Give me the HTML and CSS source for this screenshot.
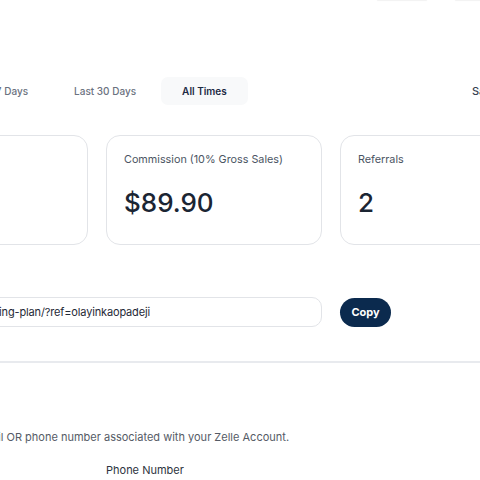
FILE: index.html
```html
<!DOCTYPE html>
<html>
<head>
<meta charset="utf-8">
<link rel="stylesheet" href="styles.css">
</head>
<body>
<div class="page">
  <div class="topbar">
    <span class="ghost ghost-a"></span>
    <span class="ghost ghost-b"></span>
  </div>
  <div class="tabs-row">
    <div class="tabs">
      <span class="tab">Last 7 Days</span>
      <span class="tab">Last 30 Days</span>
      <span class="tab active">All Times</span>
    </div>
    <span class="right-label">Sales</span>
  </div>
  <div class="cards">
    <div class="card">
      <div class="card-label">Total Sales</div>
      <div class="card-value">$899.00</div>
    </div>
    <div class="card">
      <div class="card-label">Commission (10% Gross Sales)</div>
      <div class="card-value">$89.90</div>
    </div>
    <div class="card">
      <div class="card-label">Referrals</div>
      <div class="card-value">2</div>
    </div>
  </div>
  <div class="link-row">
    <div class="link-input"><span class="link-text">https://example.com/p/mentoring-plan/?ref=olayinkaopadeji</span></div>
    <button class="copy-btn">Copy</button>
  </div>
  <div class="divider"></div>
  <p class="note">Enter the email OR phone number associated with your Zelle Account.</p>
  <div class="fields">
    <span class="field-label">Email</span>
    <span class="field-label">Phone Number</span>
  </div>
</div>
</body>
</html>
```
FILE: styles.css
```css
html, body {
  margin: 0;
  padding: 0;
  background: #ffffff;
  overflow: hidden;
  width: 480px;
  height: 480px;
}
body {
  font-family: Inter, "Noto Sans", sans-serif;
  color: #1f2937;
}
.page {
  margin-left: -128px;
  width: 740px;
}
.topbar {
  height: 0;
  display: flex;
  gap: 28px;
  padding-left: 505px;
}
.ghost {
  display: block;
  height: 1px;
  margin-top: -1px;
  box-shadow: 0 1px 1px rgba(0,0,0,0.06);
}
.ghost-a { width: 50px; }
.ghost-b { width: 50px; }
.tabs-row {
  display: flex;
  justify-content: space-between;
  align-items: center;
  margin-top: 77px;
  width: 740px;
}
.tabs {
  display: flex;
  gap: 4px;
  padding-left: 80px;
}
.tab {
  display: block;
  padding: 0 21px;
  height: 28px;
  line-height: 28px;
  border-radius: 7px;
  font-size: 10px;
  color: #6b7280;
  font-weight: 500;
}
.tab.active {
  background: #f8f9fa;
  color: #1c2a44;
  font-weight: 600;
}
.right-label {
  font-size: 11px;
  color: #374151;
  font-weight: 500;
  width: 140px;
}
.cards {
  display: grid;
  grid-template-columns: 216px 216px 216px;
  gap: 18px;
  margin-top: 30px;
}
.card {
  box-sizing: border-box;
  height: 110px;
  border: 1px solid #e2e4e8;
  border-radius: 14px;
  padding: 16px 17px 0;
}
.card-label {
  font-size: 10.8px;
  color: #4b5563;
  line-height: 16px;
}
.card-value {
  margin-top: 17px;
  font-size: 26px;
  font-weight: 500;
  color: #1b2533;
  line-height: 36px;
}
.link-row {
  display: flex;
  align-items: center;
  gap: 18px;
  margin-top: 52px;
}
.link-input {
  box-sizing: border-box;
  width: 450px;
  height: 30px;
  border: 1px solid #e2e4e8;
  border-radius: 10px;
  display: flex;
  justify-content: flex-end;
  align-items: center;
  overflow: hidden;
  padding-right: 171px;
}
.link-text {
  flex: none;
  font-size: 11px;
  letter-spacing: -0.15px;
  color: #1f2937;
  white-space: nowrap;
}
.copy-btn {
  box-sizing: border-box;
  width: 51px;
  height: 29px;
  border: none;
  border-radius: 15px;
  background: #0b2a4e;
  color: #ffffff;
  font-family: Inter, sans-serif;
  font-weight: 700;
  font-size: 11px;
  padding: 0;
}
.divider {
  margin-top: 34px;
  height: 2px;
  background: #e8eaee;
  width: 740px;
}
.note {
  margin: 66px 0 0;
  font-size: 11px;
  color: #555b66;
  line-height: 16px;
  padding-left: 54px;
}
.fields {
  display: flex;
  margin-top: 17px;
  gap: 0;
}
.field-label {
  font-size: 11px;
  color: #2d3340;
  width: 234px;
  line-height: 16px;
}
```
